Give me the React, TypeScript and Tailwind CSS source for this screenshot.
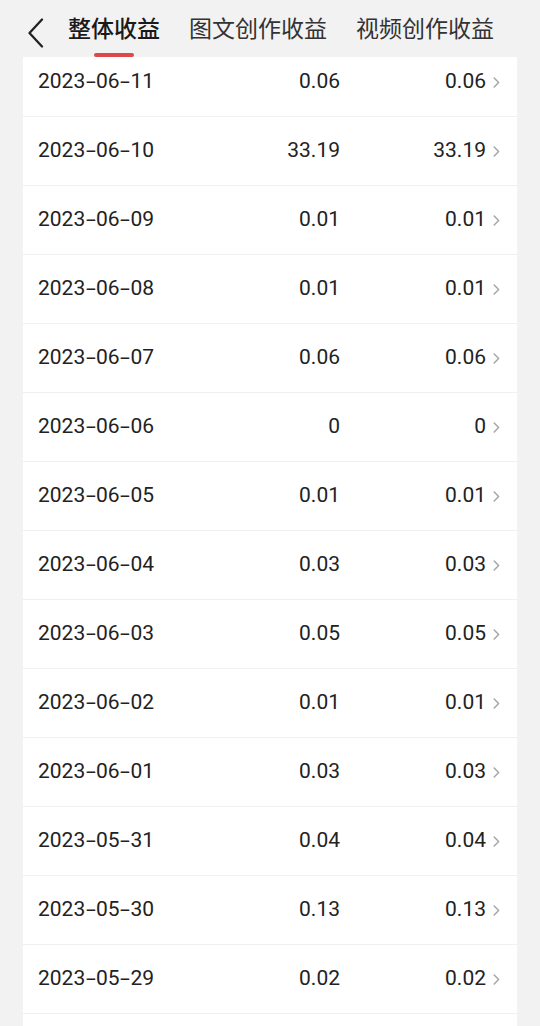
import React from "react";

const rows: [string, string][] = [
  ["2023-06-11", "0.06"],
  ["2023-06-10", "33.19"],
  ["2023-06-09", "0.01"],
  ["2023-06-08", "0.01"],
  ["2023-06-07", "0.06"],
  ["2023-06-06", "0"],
  ["2023-06-05", "0.01"],
  ["2023-06-04", "0.03"],
  ["2023-06-03", "0.05"],
  ["2023-06-02", "0.01"],
  ["2023-06-01", "0.03"],
  ["2023-05-31", "0.04"],
  ["2023-05-30", "0.13"],
  ["2023-05-29", "0.02"],
];

function DateText({ d }: { d: string }) {
  const [y, m, day] = d.split("-");
  return (
    <span className="flex-1 flex">
      <span>{y}</span>
      <span className="mx-[2.5px] inline-block scale-x-[1.7]">-</span>
      <span>{m}</span>
      <span className="mx-[2.5px] inline-block scale-x-[1.7]">-</span>
      <span>{day}</span>
    </span>
  );
}

export default function App() {
  return (
    <div
      className="w-[540px] h-[1026px] overflow-hidden bg-[#f2f2f2] flex flex-col"
      style={{ fontFamily: 'Roboto, "Noto Sans CJK SC", sans-serif' }}
    >
      <div className="h-[57px] shrink-0 flex items-start relative">
        <svg className="absolute left-[27px] top-[18px]" width="17" height="30" viewBox="0 0 17 30" fill="none">
          <path d="M15 1.5 L2.5 15 L15 28.5" stroke="#222" strokeWidth="2.3" strokeLinecap="round" strokeLinejoin="round" />
        </svg>
        <div className="flex items-start pl-[68px] gap-[29px] pt-[11px] text-[23px] leading-[32px]" style={{ fontFamily: '"Noto Sans CJK SC", sans-serif' }}>
          <div className="relative flex flex-col items-center">
            <span className="font-medium text-[#1a1a1a]">整体收益</span>
            <span className="absolute top-[42px] w-[40px] h-[4px] rounded-full bg-[#e0474c]" />
          </div>
          <span className="text-[#333]">图文创作收益</span>
          <span className="text-[#333]">视频创作收益</span>
        </div>
      </div>
      <div className="mx-[23px] bg-white flex-1 overflow-hidden">
        <div className="-mt-[9px]">
          {rows.map(([d, v]) => (
            <div
              key={d}
              className="h-[69px] flex items-center pb-[1px] pl-[15px] pr-[17px] border-b border-[#f0f0f0] text-[21px] text-[#222]"
            >
              <DateText d={d} />
              <span className="w-[120px] text-right">{v}</span>
              <span className="w-[146px] text-right">{v}</span>
              <svg className="ml-[7px] mt-[2px]" width="7" height="11" viewBox="0 0 7 11" fill="none">
                <path d="M1.2 1 L5.6 5.5 L1.2 10" stroke="#a6a6a6" strokeWidth="1.5" strokeLinecap="round" strokeLinejoin="round" />
              </svg>
            </div>
          ))}
        </div>
      </div>
    </div>
  );
}
